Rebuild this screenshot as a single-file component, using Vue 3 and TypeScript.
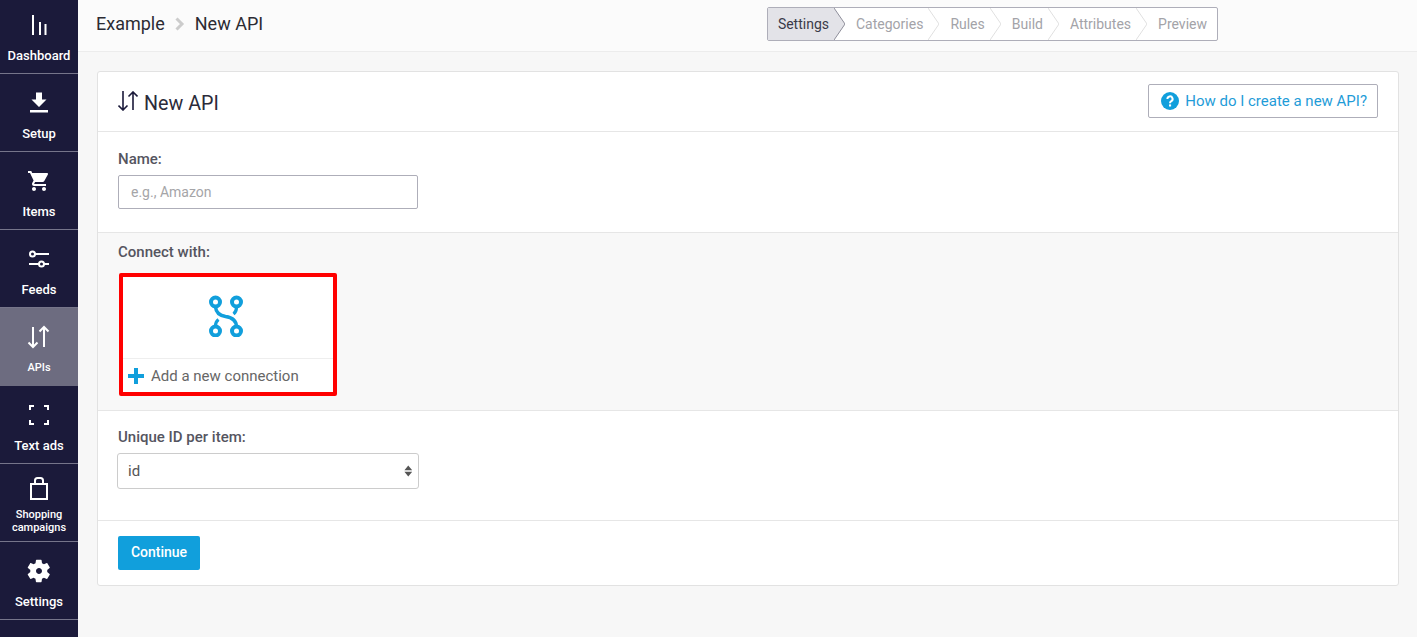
<script setup lang="ts">
interface NavItem {
  label: string
  fill?: string
  stroke?: string
  active?: boolean
  tall?: boolean
  small?: boolean
}
const nav: NavItem[] = [
  { label: 'Dashboard', stroke: 'M6 2v20M13 9v13M18.5 11v11' },
  { label: 'Setup', fill: 'M19.5 8.5h-4.5V1.5H9v7H4.5L12 16zM3 19v2.5h18V19z' },
  {
    label: 'Items',
    fill: 'M7 18c-1.1 0-1.99.9-1.99 2S5.9 22 7 22s2-.9 2-2-.9-2-2-2zM1 2v2h2l3.6 7.59-1.35 2.45c-.16.28-.25.61-.25.96 0 1.1.9 2 2 2h12v-2H7.42c-.14 0-.25-.11-.25-.25l.03-.12.9-1.63h7.45c.75 0 1.41-.41 1.75-1.03l3.58-6.49c.08-.14.12-.31.12-.48 0-.55-.45-1-1-1H5.21l-.94-2H1zm16 16c-1.1 0-1.99.9-1.99 2s.89 2 1.99 2 2-.9 2-2-.9-2-2-2z',
  },
  {
    label: 'Feeds',
    stroke:
      'M8 7a2.5 2.5 0 1 1-5 0a2.5 2.5 0 1 1 5 0M8 7h14M17 17a2.5 2.5 0 1 1-5 0a2.5 2.5 0 1 1 5 0M2 17h10M17 17h5',
  },
  { label: 'APIs', stroke: 'M6 2v20M1.5 17.5L6 22l4.5-4.5M17 22V2M12.5 6.5L17 2l4.5 4.5', active: true, small: true },
  { label: 'Text ads', stroke: 'M3 7V3h4M17 3h4v4M21 17v4h-4M7 21H3v-4' },
  {
    label: 'Shopping campaigns',
    stroke: 'M4 8h16v15H4zM8 8V4.5A2.5 2.5 0 0 1 10.5 2h3A2.5 2.5 0 0 1 16 4.5V8',
    tall: true,
    small: true,
  },
  {
    label: 'Settings',
    fill: 'M20.2 13.1c.05-.36.07-.72.07-1.1 0-.37-.02-.75-.08-1.1l2.4-1.87c.21-.17.27-.48.14-.72l-2.27-3.93c-.14-.26-.44-.34-.7-.26l-2.82 1.13c-.59-.45-1.22-.83-1.91-1.11l-.43-3c-.05-.28-.28-.48-.57-.48H9.5c-.28 0-.51.2-.55.48l-.43 3c-.7.28-1.33.67-1.91 1.11L3.79 4.12c-.26-.09-.56 0-.7.26L.82 8.31c-.14.25-.09.56.14.72l2.4 1.87c-.06.35-.11.74-.11 1.1s.02.75.08 1.1l-2.4 1.87c-.21.17-.27.48-.14.72l2.27 3.93c.14.26.44.34.7.26l2.82-1.13c.59.45 1.22.83 1.91 1.11l.43 3c.06.28.28.48.57.48h4.54c.28 0 .52-.2.55-.48l.43-3c.7-.28 1.33-.66 1.91-1.11l2.82 1.13c.26.09.56 0 .7-.26l2.27-3.93c.14-.26.08-.56-.14-.72zM12 15c-1.65 0-3-1.35-3-3s1.35-3 3-3 3 1.35 3 3-1.35 3-3 3z',
  },
]
const steps = ['Settings', 'Categories', 'Rules', 'Build', 'Attributes', 'Preview']
</script>

<template>
  <div class="app">
    <aside class="sidebar">
      <div class="nav-list">
        <a
          v-for="item in nav"
          :key="item.label"
          class="nav-item"
          :class="{ active: item.active, tall: item.tall, small: item.small }"
        >
          <svg class="nav-icon" viewBox="0 0 24 24" width="24" height="24">
            <path v-if="item.fill" :d="item.fill" fill="#fff" />
            <path v-if="item.stroke" :d="item.stroke" fill="none" stroke="#fff" stroke-width="2" />
          </svg>
          <span class="nav-label">{{ item.label }}</span>
        </a>
      </div>
    </aside>

    <div class="main">
      <header class="topbar">
        <div class="crumbs">
          <span>Example</span>
          <svg class="crumb-sep" viewBox="0 0 10 14" width="10" height="14">
            <path d="M1.5 1.5L7 7l-5.5 5.5" fill="none" stroke="#ccc" stroke-width="3" />
          </svg>
          <span>New API</span>
        </div>
        <nav class="steps">
          <div v-for="(s, i) in steps" :key="s" class="step" :class="{ current: i === 0, first: i === 0 }">
            <span class="step-label">{{ s }}</span>
            <svg v-if="i < steps.length - 1" class="chev" viewBox="0 0 11 32" width="11" height="32">
              <path d="M0 0L11 16L0 32" :fill="i === 0 ? '#e3e3e8' : 'none'" :stroke="i === 0 ? '#8e8e9a' : '#e0e0e0'" />
            </svg>
          </div>
        </nav>
      </header>

      <section class="card">
        <div class="card-head">
          <h1 class="title">
            <svg viewBox="0 0 20 20" width="20" height="20">
              <path
                d="M5 0v19M0.5 14.5L5 19l4.5-4.5M15 19V1M10.5 5.5L15 1l4.5 4.5"
                fill="none"
                stroke="#1b1a3a"
                stroke-width="1.6"
              />
            </svg>
            <span>New API</span>
          </h1>
          <a class="help">
            <svg viewBox="0 0 18 18" width="18" height="18">
              <circle cx="9" cy="9" r="9" fill="#119fdc" />
              <path d="M6.4 7a2.6 2.6 0 1 1 3.9 2.2c-.9.5-1.3 1-1.3 2" fill="none" stroke="#fff" stroke-width="2" />
              <rect x="8" y="12.4" width="2.1" height="2.1" fill="#fff" />
            </svg>
            <span>How do I create a new API?</span>
          </a>
        </div>

        <div class="section name-section">
          <label class="field-label">Name:</label>
          <input class="text-input" type="text" placeholder="e.g., Amazon" />
        </div>

        <div class="section connect-section">
          <label class="field-label">Connect with:</label>
          <div class="conn-card">
            <div class="conn-top">
              <svg viewBox="0 0 36 42" width="36" height="42" fill="none" stroke="#119fdc" stroke-width="4">
                <circle cx="7.5" cy="7" r="4.5" />
                <circle cx="28.5" cy="7" r="4.5" />
                <circle cx="7.5" cy="36" r="4.5" />
                <circle cx="28.5" cy="36" r="4.5" />
                <path d="M7.5 12C8 18 12 20.5 17.5 21.5C24 22.5 28.5 26 28.5 32" stroke-width="3.4" />
                <path d="M28.5 12C28.5 15 27.5 17.5 25.5 19M7.5 31C7.5 28 8.5 26 10.5 24.5" stroke-width="3.2" />
              </svg>
            </div>
            <div class="conn-bottom">
              <svg viewBox="0 0 16 16" width="16" height="16">
                <path d="M6 0h4v6h6v4h-6v6H6v-6H0V6h6z" fill="#119fdc" />
              </svg>
              <span>Add a new connection</span>
            </div>
          </div>
        </div>

        <div class="section unique-section">
          <label class="field-label">Unique ID per item:</label>
          <div class="select-wrap">
            <select class="select">
              <option>id</option>
            </select>
            <svg class="select-arrows" viewBox="0 0 10 14" width="8.5" height="12">
              <path d="M5 .5l4.5 5.5h-9zM5 13.5L.5 8h9z" fill="#555" />
            </svg>
          </div>
        </div>

        <div class="card-foot">
          <button class="btn" type="button">Continue</button>
        </div>
      </section>
    </div>
  </div>
</template>

<style scoped>
.app {
  display: flex;
  height: 637px;
  overflow: hidden;
  font-family: Roboto, "Liberation Sans", sans-serif;
  background: #f7f7f7;
}
.sidebar {
  width: 78px;
  flex: none;
  background: #1b1a3a;
  overflow: hidden;
}
.nav-list {
  margin-top: -4px;
}
.nav-item {
  display: flex;
  flex-direction: column;
  align-items: center;
  height: 78px;
  box-sizing: border-box;
  padding-top: 17px;
  border-bottom: 1px solid #76758a;
  color: #fff;
  text-align: center;
}
.nav-item.active {
  background: #6d6c80;
  border-bottom-color: #6d6c80;
}
.nav-item.tall {
  padding-top: 12px;
}
.nav-icon {
  flex: none;
}
.nav-label {
  margin-top: 11px;
  font-size: 13px;
  font-weight: 500;
  line-height: 16px;
}
.small .nav-label {
  font-size: 11px;
}
.tall .nav-label {
  margin-top: 8px;
  line-height: 13px;
  width: 70px;
}
.main {
  flex: 1;
  min-width: 0;
}
.topbar {
  display: flex;
  align-items: center;
  height: 52px;
  box-sizing: border-box;
  padding: 0 199px 4px 18px;
  background: #fbfbfb;
  border-bottom: 1px solid #ececec;
}
.crumbs {
  display: flex;
  align-items: center;
  font-size: 18px;
  color: #2b2b33;
}
.crumb-sep {
  margin: 0 10px;
}
.steps {
  display: flex;
  margin-left: auto;
  height: 34px;
  box-sizing: border-box;
  border: 1px solid #aeaeb9;
  border-radius: 2px;
  background: #fff;
  font-size: 14px;
  color: #a3a3a8;
}
.step {
  display: flex;
  align-items: stretch;
}
.step-label {
  display: flex;
  align-items: center;
  padding-right: 5px;
}
.step .chev {
  margin-right: 11px;
}
.step:last-child .step-label {
  padding-right: 10px;
}
.step.current .step-label {
  padding-left: 10px;
  background: #e3e3e8;
  color: #3a3a48;
}
.card {
  margin: 19px 18px 0 19px;
  background: #fff;
  border: 1px solid #e2e2e2;
  border-radius: 3px;
}
.card-head {
  display: flex;
  align-items: center;
  justify-content: space-between;
  height: 60px;
  box-sizing: border-box;
  padding: 0 20px 1px;
  border-bottom: 1px solid #e6e6e6;
}
.title {
  display: flex;
  align-items: center;
  gap: 6px;
  margin: 4px 0 0;
  font-size: 19.7px;
  font-weight: 400;
  color: #2b2b3a;
}
.title svg {
  margin-top: -5px;
}
.help {
  display: flex;
  align-items: center;
  gap: 6px;
  height: 34px;
  box-sizing: border-box;
  padding: 0 10px 0 12px;
  border: 1px solid #aeaeb9;
  border-radius: 2px;
  font-size: 15px;
  color: #1f9cd8;
}
.section {
  padding-left: 20px;
  padding-right: 20px;
}
.field-label {
  display: block;
  font-size: 15px;
  font-weight: 500;
  line-height: 20px;
  color: #55555f;
}
.name-section {
  padding-top: 17px;
  padding-bottom: 23px;
}
.text-input {
  display: block;
  width: 300px;
  height: 34px;
  box-sizing: border-box;
  margin-top: 6px;
  padding: 0 12px;
  border: 1px solid #aeaeb9;
  border-radius: 2px;
  outline: none;
  font: 14px Roboto, "Liberation Sans", sans-serif;
  color: #333;
}
.text-input::placeholder {
  color: #a5a5a8;
  opacity: 1;
}
.connect-section {
  padding-top: 9px;
  padding-bottom: 14px;
  background: #f8f8f8;
  border-top: 1px solid #e6e6e6;
  border-bottom: 1px solid #e6e6e6;
}
.conn-card {
  width: 218px;
  height: 123px;
  box-sizing: border-box;
  margin: 11px 0 0 1px;
  border: 4px solid #f00;
  border-radius: 2px;
  background: #fff;
  display: flex;
  flex-direction: column;
}
.conn-top {
  height: 82px;
  flex: none;
  display: flex;
  align-items: center;
  justify-content: center;
  box-sizing: border-box;
  padding: 0 5px 3px 0;
  border-bottom: 1px solid #eee;
}
.conn-bottom {
  flex: 1;
  display: flex;
  align-items: center;
  gap: 7px;
  padding-left: 5px;
  font-size: 15px;
  color: #666;
}
.unique-section {
  padding-top: 16px;
  padding-bottom: 31px;
}
.select-wrap {
  position: relative;
  width: 302px;
  margin: 6px 0 0 -1px;
}
.select {
  display: block;
  width: 100%;
  height: 36px;
  box-sizing: border-box;
  padding: 0 10px;
  border: 1px solid #ccc;
  border-radius: 3px;
  outline: none;
  appearance: none;
  background: #fff;
  font: 15px Roboto, "Liberation Sans", sans-serif;
  color: #555;
}
.select-arrows {
  position: absolute;
  right: 7px;
  top: 12px;
  pointer-events: none;
}
.card-foot {
  padding: 15px 20px;
  border-top: 1px solid #e6e6e6;
}
.btn {
  display: block;
  width: 82px;
  height: 34px;
  padding: 0 0 2px;
  border: none;
  border-radius: 2px;
  background: #119fdc;
  color: #fff;
  font: 500 14px Roboto, "Liberation Sans", sans-serif;
}
</style>
<style>
html,
body {
  margin: 0;
  background: #f8f8f8;
}
</style>
